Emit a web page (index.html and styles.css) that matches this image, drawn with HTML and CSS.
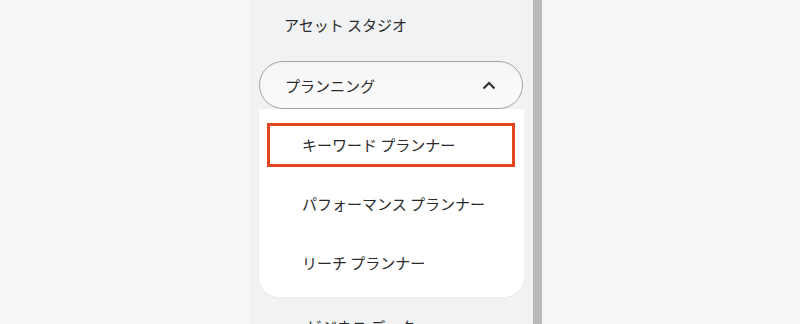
FILE: index.html
```html
<!DOCTYPE html>
<html lang="ja">
<head>
    <meta charset="UTF-8">
    <meta name="viewport" content="width=device-width, initial-scale=1.0">
    <link rel="stylesheet" href="styles.css">
    <title>プランニング</title>
</head>
<body>
    <div class="page">
        <div class="left_space"></div>

        <nav class="sidebar">
            <div class="nav_title">アセット スタジオ</div>

            <div class="group">
                <button class="group_head">
                    <span>プランニング</span>
                    <svg class="chevron" width="14" height="9" viewBox="0 0 14 9">
                        <path d="M1.5 7.5 L7 2 L12.5 7.5" fill="none" stroke="#2b2b2b" stroke-width="2"/>
                    </svg>
                </button>

                <div class="group_body">
                    <a class="item selected">キーワード プランナー</a>
                    <a class="item">パフォーマンス プランナー</a>
                    <a class="item">リーチ プランナー</a>
                </div>
            </div>

            <div class="nav_title next">ビジネス データ</div>
        </nav>

        <div class="right_space"></div>
    </div>
</body>
</html>
```

FILE: styles.css
```css
*{
    margin:0;
    padding:0;
    box-sizing: border-box;
}

body{
    background-color: #f6f7f9;
    height:324px;
    overflow: hidden;
    font-family: "Noto Sans CJK JP", "Noto Sans", sans-serif;
    color:#2a2a2a;
}

.page{
    display:flex;
    height:324px;
}

.left_space{
    width:249px;
    background-color: #f6f7f9;
}

.sidebar{
    width:293px;
    background-color: #f1f2f4;
    border-right:9px solid #b7b8ba;
    padding:0 10px;
    overflow: hidden;
}

.right_space{
    flex:1;
    background-color: #f5f6f8;
}

.nav_title{
    height:50px;
    line-height:50px;
    padding-left:25px;
    font-size:15px;
}

.nav_title.next{
    margin-top:10px;
    padding-left:48px;
    line-height:40px;
}

.group{
    margin-top:11px;
}

.group_head{
    width:100%;
    height:48px;
    display:flex;
    align-items:center;
    justify-content: space-between;
    padding:0 26px 0 25px;
    border:1px solid #a3a3a3;
    border-radius:24px;
    background: linear-gradient(to bottom, #f6f6f6, #fbfbfb);
    font-family: inherit;
    font-size:15px;
    color:#2a2a2a;
    outline:none;
}

.group_body{
    background-color: #ffffff;
    border-radius:0 0 20px 20px;
    padding:14px 9px 12px 8px;
    display:flex;
    flex-direction: column;
    gap:15px;
    margin-right:-1px;
    box-shadow: 0 1px 2px rgba(0,0,0,0.04);
}

.item{
    display:block;
    height:44px;
    line-height:38px;
    padding-left:32px;
    border:3px solid transparent;
    font-size:15px;
    color:#2a2a2a;
}

.item.selected{
    border-color:#e2451f;
}
```
